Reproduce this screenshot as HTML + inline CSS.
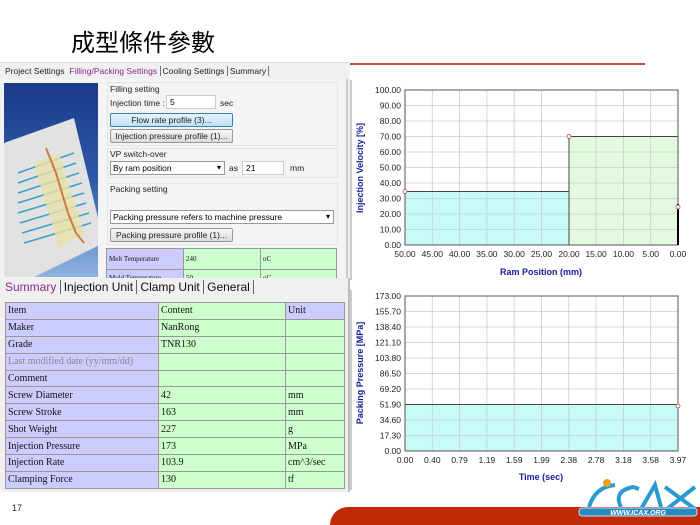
<!DOCTYPE html>
<html style="overflow:hidden;width:700px;height:525px"><head><meta charset="utf-8">
<style>
*{margin:0;padding:0;box-sizing:border-box}
body{width:700px;height:525px;background:#fff;position:relative;overflow:hidden;font-family:"Liberation Sans",sans-serif}
.a{position:absolute}
.t{font-size:8.5px;color:#222;white-space:nowrap}
.btn{position:absolute;border:1px solid #999;background:linear-gradient(#f6f6f6,#dcdcdc);font-size:8.5px;text-align:center;line-height:12px;border-radius:2px;color:#222}
.inp{position:absolute;background:#fff;border:1px solid #ccc;font-size:8.5px;padding-left:3px;line-height:12px}
.sel{position:absolute;background:#fff;border:1px solid #999;font-size:8.5px;padding-left:2px;line-height:12px}
.sel:after{content:"▾";position:absolute;right:3px;top:0;font-size:8px}
table{border-collapse:collapse;font-family:"Liberation Serif",serif;font-size:10px}
td{border:1px solid #999;padding:0 2px;height:16.9px;color:#111}
td.i{background:#ccccff}
td.g{background:#ccffcc}
</style></head><body>
<div class="a" style="left:71px;top:23px;font-size:24px;font-family:'Liberation Sans','Noto Sans CJK TC',sans-serif;color:#000">成型條件參數</div>
<div class="a" style="left:350px;top:63px;width:295px;height:2px;background:#c0503a"></div>

<div class="a" style="left:0;top:62px;width:350px;height:216px;background:#f0f0f0;border-top:1px solid #e6d6d0"></div>
<div class="a t" style="left:5px;top:66px">Project Settings&nbsp;&nbsp;<span style="color:#8a2a8a">Filling/Packing Settings</span> <span style="border-left:1px solid #777;padding-left:2px">Cooling Settings</span> <span style="border-left:1px solid #777;padding-left:2px;border-right:1px solid #777;padding-right:2px">Summary</span></div>
<div class="a" style="left:2px;top:79px;width:346px;height:199px;background:#f4f4f4;border-right:2px solid #ccc"></div>
<svg class="a" style="left:4px;top:83px" width="94" height="194">
<defs><linearGradient id="bg" x1="0" y1="0" x2="0" y2="1"><stop offset="0" stop-color="#1c3a8c"/><stop offset="0.5" stop-color="#2e5aa8"/><stop offset="1" stop-color="#8fb4e0"/></linearGradient></defs>
<rect width="94" height="194" fill="url(#bg)"/>
<polygon points="0,60 70,35 100,160 30,194 0,194" fill="#e2e2e2"/>
<g stroke="#3aa0cc" stroke-width="1.5">
<line x1="14" y1="90" x2="70" y2="70"/><line x1="14" y1="100" x2="72" y2="80"/><line x1="14" y1="110" x2="75" y2="90"/><line x1="14" y1="120" x2="78" y2="100"/><line x1="14" y1="130" x2="80" y2="110"/><line x1="16" y1="140" x2="82" y2="120"/><line x1="18" y1="150" x2="85" y2="130"/><line x1="20" y1="160" x2="87" y2="140"/></g>
<polygon points="30,80 55,70 80,150 55,165" fill="#e8e2a8" opacity="0.8"/>
<polyline points="42,65 52,90 58,110 64,130 72,150 80,160" fill="none" stroke="#d07a40" stroke-width="2"/>
</svg>
<div class="a" style="left:107px;top:82px;width:231px;height:64px;border:1px solid #e4e4e4"></div>
<div class="a t" style="left:110px;top:84px">Filling setting</div>
<div class="a t" style="left:110px;top:98px">Injection time :</div>
<div class="inp" style="left:166px;top:95px;width:50px;height:14px">5</div>
<div class="a t" style="left:220px;top:98px">sec</div>
<div class="btn" style="left:110px;top:113px;width:123px;height:14px;background:linear-gradient(#e6f4fc,#bfe2f6);border-color:#3c7fb1">Flow rate profile (3)...</div>
<div class="btn" style="left:110px;top:129px;width:123px;height:14px">Injection pressure profile (1)...</div>
<div class="a" style="left:107px;top:148px;width:231px;height:30px;border:1px solid #e4e4e4"></div>
<div class="a t" style="left:110px;top:149px">VP switch-over</div>
<div class="sel" style="left:110px;top:161px;width:115px;height:14px">By ram position</div>
<div class="a t" style="left:229px;top:163px">as</div>
<div class="inp" style="left:242px;top:161px;width:42px;height:14px">21</div>
<div class="a t" style="left:290px;top:163px">mm</div>
<div class="a" style="left:107px;top:183px;width:231px;height:62px;border:1px solid #e4e4e4"></div>
<div class="a t" style="left:110px;top:184px">Packing setting</div>
<div class="sel" style="left:110px;top:210px;width:224px;height:14px">Packing pressure refers to machine pressure</div>
<div class="btn" style="left:110px;top:228px;width:123px;height:14px">Packing pressure profile (1)...</div>
<table class="a" style="left:106px;top:248px;width:231px;font-size:7px">
<tr><td class="i" style="width:77px;height:21px">Melt Temperature</td><td class="g" style="width:77px">240</td><td class="g">oC</td></tr>
<tr><td class="i" style="height:12px">Mold Temperature</td><td class="g">50</td><td class="g">oC</td></tr>
</table>

<div class="a" style="left:0;top:278px;width:350px;height:214px;background:#f0f0f0;border-right:2px solid #bbb"></div>
<div class="a" style="left:5px;top:280px;font-size:12px;white-space:nowrap;color:#111"><span style="color:#8a2a8a">Summary</span> <span style="border-left:1px solid #666;padding-left:3px">Injection Unit</span> <span style="border-left:1px solid #666;padding-left:3px">Clamp Unit</span> <span style="border-left:1px solid #666;padding-left:3px;border-right:1px solid #666;padding-right:3px">General</span></div>
<table class="a" style="left:5px;top:302px;width:340px">
<tr><td class="i" style="width:153px">Item</td><td class="g" style="width:127px">Content</td><td class="i">Unit</td></tr>
<tr><td class="i">Maker</td><td class="g">NanRong</td><td class="g"></td></tr>
<tr><td class="i">Grade</td><td class="g">TNR130</td><td class="g"></td></tr>
<tr><td class="i" style="color:#888">Last modified date (yy/mm/dd)</td><td class="g"></td><td class="g"></td></tr>
<tr><td class="i">Comment</td><td class="g"></td><td class="g"></td></tr>
<tr><td class="i">Screw Diameter</td><td class="g">42</td><td class="g">mm</td></tr>
<tr><td class="i">Screw Stroke</td><td class="g">163</td><td class="g">mm</td></tr>
<tr><td class="i">Shot Weight</td><td class="g">227</td><td class="g">g</td></tr>
<tr><td class="i">Injection Pressure</td><td class="g">173</td><td class="g">MPa</td></tr>
<tr><td class="i">Injection Rate</td><td class="g">103.9</td><td class="g">cm^3/sec</td></tr>
<tr><td class="i">Clamping Force</td><td class="g">130</td><td class="g">tf</td></tr>
</table>

<svg class="a" style="left:350px;top:80px" width="350" height="410" font-family="Liberation Sans,sans-serif" font-size="8.5">
<rect x="0" y="0" width="2" height="200" fill="#ccc"/>
<rect x="55" y="10" width="273" height="155" fill="#fff"/>
<rect x="55" y="111.5" width="164" height="53.5" fill="#c8fafa"/>
<rect x="219" y="56.5" width="109" height="108.5" fill="#e4fae0"/>
<g stroke="#ccc" stroke-width="0.8">
<line x1="55" y1="25.5" x2="328" y2="25.5"/><line x1="55" y1="41" x2="328" y2="41"/><line x1="55" y1="56.5" x2="328" y2="56.5"/><line x1="55" y1="72" x2="328" y2="72"/><line x1="55" y1="87.5" x2="328" y2="87.5"/><line x1="55" y1="103" x2="328" y2="103"/><line x1="55" y1="118.5" x2="328" y2="118.5"/><line x1="55" y1="134" x2="328" y2="134"/><line x1="55" y1="149.5" x2="328" y2="149.5"/>
<line x1="82.3" y1="10" x2="82.3" y2="165"/><line x1="109.6" y1="10" x2="109.6" y2="165"/><line x1="136.9" y1="10" x2="136.9" y2="165"/><line x1="164.2" y1="10" x2="164.2" y2="165"/><line x1="191.5" y1="10" x2="191.5" y2="165"/><line x1="246.1" y1="10" x2="246.1" y2="165"/><line x1="273.4" y1="10" x2="273.4" y2="165"/><line x1="300.7" y1="10" x2="300.7" y2="165"/></g>
<polyline points="55,111.5 219,111.5 219,165" fill="none" stroke="#444"/>
<polyline points="219,165 219,56.5 328,56.5 328,165" fill="none" stroke="#444"/>
<rect x="55" y="10" width="273" height="155" fill="none" stroke="#555"/>
<line x1="328" y1="124" x2="328" y2="165" stroke="#000" stroke-width="2"/>
<g fill="#fff" stroke="#c04040" stroke-width="0.8"><circle cx="55" cy="111.5" r="2"/><circle cx="219" cy="56.5" r="2"/><circle cx="328" cy="127" r="2"/></g>
<g text-anchor="end" fill="#222"><text x="51" y="13">100.00</text><text x="51" y="28.5">90.00</text><text x="51" y="44">80.00</text><text x="51" y="59.5">70.00</text><text x="51" y="75">60.00</text><text x="51" y="90.5">50.00</text><text x="51" y="106">40.00</text><text x="51" y="121.5">30.00</text><text x="51" y="137">20.00</text><text x="51" y="152.5">10.00</text><text x="51" y="168">0.00</text></g>
<g text-anchor="middle" fill="#222"><text x="55" y="177">50.00</text><text x="82.3" y="177">45.00</text><text x="109.6" y="177">40.00</text><text x="136.9" y="177">35.00</text><text x="164.2" y="177">30.00</text><text x="191.5" y="177">25.00</text><text x="219" y="177">20.00</text><text x="246.1" y="177">15.00</text><text x="273.4" y="177">10.00</text><text x="300.7" y="177">5.00</text><text x="328" y="177">0.00</text></g>
<text x="191" y="195" text-anchor="middle" fill="#1a1a9a" font-weight="bold" font-size="9">Ram Position (mm)</text>
<text transform="translate(13,88) rotate(-90)" text-anchor="middle" fill="#1a1a9a" font-weight="bold" font-size="9">Injection Velocity [%]</text>

<rect x="0" y="210" width="2" height="200" fill="#ccc"/>
<rect x="55" y="324.5" width="273" height="46.5" fill="#c8fafa"/>
<g stroke="#ccc" stroke-width="0.8">
<line x1="55" y1="231.5" x2="328" y2="231.5"/><line x1="55" y1="247" x2="328" y2="247"/><line x1="55" y1="262.5" x2="328" y2="262.5"/><line x1="55" y1="278" x2="328" y2="278"/><line x1="55" y1="293.5" x2="328" y2="293.5"/><line x1="55" y1="309" x2="328" y2="309"/><line x1="55" y1="340" x2="328" y2="340"/><line x1="55" y1="355.5" x2="328" y2="355.5"/>
<line x1="82.3" y1="216" x2="82.3" y2="371"/><line x1="109.6" y1="216" x2="109.6" y2="371"/><line x1="136.9" y1="216" x2="136.9" y2="371"/><line x1="164.2" y1="216" x2="164.2" y2="371"/><line x1="191.5" y1="216" x2="191.5" y2="371"/><line x1="218.8" y1="216" x2="218.8" y2="371"/><line x1="246.1" y1="216" x2="246.1" y2="371"/><line x1="273.4" y1="216" x2="273.4" y2="371"/><line x1="300.7" y1="216" x2="300.7" y2="371"/></g>
<line x1="55" y1="324.5" x2="328" y2="324.5" stroke="#444"/>
<rect x="55" y="216" width="273" height="155" fill="none" stroke="#555"/>
<circle cx="328" cy="326" r="2" fill="#fff" stroke="#c04040" stroke-width="0.8"/>
<g text-anchor="end" fill="#222"><text x="51" y="219">173.00</text><text x="51" y="234.5">155.70</text><text x="51" y="250">138.40</text><text x="51" y="265.5">121.10</text><text x="51" y="281">103.80</text><text x="51" y="296.5">86.50</text><text x="51" y="312">69.20</text><text x="51" y="327.5">51.90</text><text x="51" y="343">34.60</text><text x="51" y="358.5">17.30</text><text x="51" y="374">0.00</text></g>
<g text-anchor="middle" fill="#222"><text x="55" y="383">0.00</text><text x="82.3" y="383">0.40</text><text x="109.6" y="383">0.79</text><text x="136.9" y="383">1.19</text><text x="164.2" y="383">1.59</text><text x="191.5" y="383">1.99</text><text x="218.8" y="383">2.38</text><text x="246.1" y="383">2.78</text><text x="273.4" y="383">3.18</text><text x="300.7" y="383">3.58</text><text x="328" y="383">3.97</text></g>
<text x="191" y="400" text-anchor="middle" fill="#1a1a9a" font-weight="bold" font-size="9">Time (sec)</text>
<text transform="translate(13,293) rotate(-90)" text-anchor="middle" fill="#1a1a9a" font-weight="bold" font-size="9">Packing Pressure [MPa]</text>
</svg>

<div class="a" style="left:12px;top:503px;font-size:9px;color:#222">17</div>
<div class="a" style="left:330px;top:507px;width:370px;height:18px;background:#c02a08;border-radius:20px 0 0 0"></div>
<svg class="a" style="left:575px;top:477px" width="125" height="48">
<g fill="none" stroke="#2a9ad0" stroke-width="4">
<path d="M14,30 Q20,10 40,8"/><path d="M46,30 Q38,14 58,10 L64,12"/><path d="M66,32 L80,8 L86,30"/><path d="M90,10 L120,32 M120,10 L92,32"/></g>
<circle cx="32" cy="6" r="4" fill="#f0a020"/>
<rect x="4" y="31" width="118" height="8" rx="3" fill="#2a8ac0" stroke="#cde" stroke-width="1"/>
<text x="63" y="38" text-anchor="middle" font-size="7" font-weight="bold" font-style="italic" fill="#fff" font-family="Liberation Sans,sans-serif">WWW.ICAX.ORG</text>
</svg>
</body></html>
